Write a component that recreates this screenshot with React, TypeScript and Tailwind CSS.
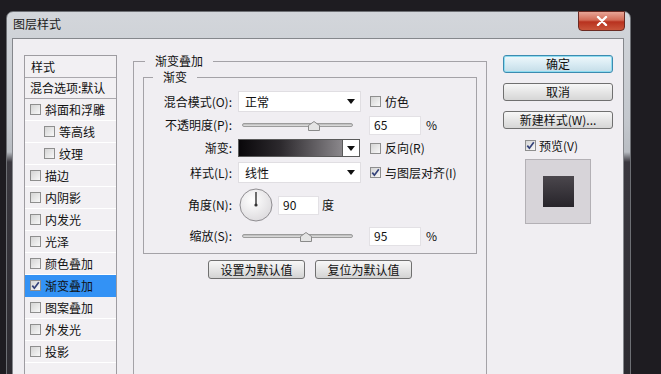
import React from 'react';

const Box = ({ checked }: { checked?: boolean }) => (
  <span className="inline-flex h-[11px] w-[11px] shrink-0 items-center justify-center border border-[#8e8e8e] bg-[linear-gradient(135deg,#d4d4d4,#f8f8f8)]">
    {checked && (
      <svg width="9" height="9" viewBox="0 0 9 9">
        <path d="M1.3 4.6 L3.4 7.2 L7.8 1.2" fill="none" stroke="#34427a" strokeWidth="1.7" />
      </svg>
    )}
  </span>
);

const Thumb = () => (
  <svg width="12" height="10" viewBox="0 0 12 10">
    <path d="M0.5 9.5 V4.5 L6 0.5 L11.5 4.5 V9.5 Z" fill="#e4e4e4" stroke="#8a8a8a" />
  </svg>
);

const Arrow = () => (
  <svg width="8" height="5" viewBox="0 0 8 5">
    <path d="M0 0 H8 L4 5 Z" fill="#111" />
  </svg>
);

const Slider = ({ at }: { at: number }) => (
  <div className="relative h-[20px] w-[123px]">
    <div className="absolute left-[4px] top-[8px] h-[4px] w-[111px] rounded-full border border-[#9c9c9c] bg-[linear-gradient(#b8b8b8,#e2e2e2)]" />
    <div className="absolute top-[6px]" style={{ left: at - 6 }}>
      <Thumb />
    </div>
  </div>
);

const Field = ({ value, w }: { value: string; w: string }) => (
  <div className={`${w} flex h-[19px] items-center border border-[#e3e1e5] bg-white pl-[4px] text-[12px]`}>{value}</div>
);

const Label = ({ children }: { children: React.ReactNode }) => (
  <div className="w-[79px] shrink-0 text-right text-[12px] leading-[14px]">{children}</div>
);

const Select = ({ value }: { value: string }) => (
  <div className="ml-[6px] flex h-[21px] w-[123px] items-center justify-between border border-[#e0dee2] bg-white pl-[6px] pr-[5px] text-[12px]">
    <span>{value}</span>
    <Arrow />
  </div>
);

const listItems = [
  { label: '斜面和浮雕' },
  { label: '等高线', indent: true },
  { label: '纹理', indent: true },
  { label: '描边' },
  { label: '内阴影' },
  { label: '内发光' },
  { label: '光泽' },
  { label: '颜色叠加' },
  { label: '渐变叠加', checked: true, active: true },
  { label: '图案叠加' },
  { label: '外发光' },
  { label: '投影' },
];

const btn =
  'flex h-[18px] w-full items-center justify-center rounded-[3px] border border-[#707070] bg-[linear-gradient(#f7f7f7,#e6e6e6_50%,#d6d6d6)] text-[12px] leading-none';

export default function App() {
  return (
    <div className="h-[374px] w-[661px] overflow-hidden bg-[#1e1c21] pl-[6px] pt-[11px] font-['Noto_Sans_CJK_SC','Noto_Sans',sans-serif] text-[#111]">
      <div className="flex h-[400px] w-[625px] flex-col rounded-t-[7px] border border-[#6d6f74] bg-[linear-gradient(to_bottom,#d3d6db_0px,#c3c7cd_110px,#b9bdc3_140px,#3a383f_150px,#2b292f_100%)]">
        <div className="flex h-[26px] shrink-0 items-start justify-between">
          <span className="pl-[6px] pt-[5px] text-[12px] leading-[14px] text-[#1a1a1a]">图层样式</span>
          <div className="-mt-[1px] mr-[5px] flex h-[20px] w-[47px] items-center justify-center rounded-b-[4px] border border-[#6b2a22] bg-[linear-gradient(#e8a596,#d26a55_45%,#b8321f_55%,#c9553b)]">
            <svg width="12" height="10" viewBox="0 0 12 10">
              <path d="M2 1 L10 9 M10 1 L2 9" stroke="#fff" strokeWidth="2.4" strokeLinecap="round" />
            </svg>
          </div>
        </div>
        <div className="flex flex-1 pl-[5px] pr-[6px]">
          <div className="flex flex-1 border border-[#85878c] bg-[#f0eef2] pl-[11px] pt-[16px]">
            {/* left style list */}
            <div className="flex h-[340px] w-[93px] shrink-0 flex-col border border-[#9e9ca1] bg-[#f2f0f3] text-[12px]">
              <div className="flex h-[22px] items-center border-b border-[#aaa8ad] pl-[6px]">样式</div>
              <div className="flex h-[21px] items-center border-b border-[#aaa8ad] pl-[5px] whitespace-nowrap">混合选项:默认</div>
              {listItems.map((it) => (
                <div
                  key={it.label}
                  className={`flex h-[22px] items-center gap-[4px] border-b whitespace-nowrap ${
                    it.indent ? 'pl-[19px]' : 'pl-[5px]'
                  } ${it.active ? 'border-[#3392f5] bg-[#3392f5]' : 'border-white'}`}
                >
                  <Box checked={it.checked} />
                  <span>{it.label}</span>
                </div>
              ))}
            </div>

            {/* middle panel */}
            <fieldset className="-mt-[1px] ml-[16px] h-[340px] w-[354px] shrink-0 border border-[#a4a2a7] px-[9px]">
              <legend className="ml-[2px] px-[10px] text-[12px] leading-[14px]">渐变叠加</legend>
              <fieldset className="mt-[2px] border border-[#a4a2a7] px-[9px] pb-[7px] pt-[7px]">
                <legend className="px-[10px] text-[12px] leading-[14px]">渐变</legend>
                <div className="flex h-[21px] items-center">
                  <Label>混合模式(O):</Label>
                  <Select value="正常" />
                  <div className="ml-[9px] flex items-center gap-[4px] text-[12px]">
                    <Box />
                    <span>仿色</span>
                  </div>
                </div>
                <div className="mt-[3px] flex h-[20px] items-center">
                  <Label>不透明度(P):</Label>
                  <div className="ml-[6px]">
                    <Slider at={76} />
                  </div>
                  <div className="ml-[8px]">
                    <Field value="65" w="w-[52px]" />
                  </div>
                  <span className="ml-[5px] text-[12px]">%</span>
                </div>
                <div className="mt-[4px] flex h-[18px] items-center">
                  <Label>渐变:</Label>
                  <div className="ml-[6px] flex h-[18px] w-[122px] border border-[#5a5a5a]">
                    <div className="flex-1 bg-[linear-gradient(to_right,#09070a,#2c292d_40%,#8a878b)]" />
                    <div className="flex w-[17px] items-center justify-center border-l border-[#5a5a5a] bg-white">
                      <Arrow />
                    </div>
                  </div>
                  <div className="ml-[10px] flex items-center gap-[4px] text-[12px]">
                    <Box />
                    <span>反向(R)</span>
                  </div>
                </div>
                <div className="mt-[5px] flex h-[21px] items-center">
                  <Label>样式(L):</Label>
                  <Select value="线性" />
                  <div className="ml-[9px] flex items-center gap-[4px] whitespace-nowrap text-[12px]">
                    <Box checked />
                    <span>与图层对齐(I)</span>
                  </div>
                </div>
                <div className="mt-[5px] flex h-[34px] items-center">
                  <Label>角度(N):</Label>
                  <svg className="ml-[7px]" width="34" height="34" viewBox="0 0 34 34">
                    <defs>
                      <radialGradient id="dial" cx="0.4" cy="0.35" r="0.7">
                        <stop offset="0" stopColor="#ffffff" />
                        <stop offset="1" stopColor="#dcdadd" />
                      </radialGradient>
                    </defs>
                    <circle cx="17" cy="17" r="16" fill="url(#dial)" stroke="#8f8d91" />
                    <line x1="17" y1="17" x2="17" y2="4" stroke="#333" strokeWidth="1.4" />
                    <circle cx="17" cy="17" r="1.6" fill="#333" />
                  </svg>
                  <div className="ml-[5px]">
                    <Field value="90" w="w-[41px]" />
                  </div>
                  <span className="ml-[3px] text-[12px]">度</span>
                </div>
                <div className="mt-[4px] flex h-[20px] items-center">
                  <Label>缩放(S):</Label>
                  <div className="ml-[6px]">
                    <Slider at={68} />
                  </div>
                  <div className="ml-[8px]">
                    <Field value="95" w="w-[52px]" />
                  </div>
                  <span className="ml-[5px] text-[12px]">%</span>
                </div>
              </fieldset>
              <div className="mt-[6px] flex justify-center gap-[10px]">
                <div className="flex h-[19px] w-[97px] items-center justify-center rounded-[3px] border border-[#707070] bg-[linear-gradient(#f7f7f7,#e6e6e6_50%,#d3d3d3)] text-[12px]">设置为默认值</div>
                <div className="flex h-[19px] w-[97px] items-center justify-center rounded-[3px] border border-[#707070] bg-[linear-gradient(#f7f7f7,#e6e6e6_50%,#d3d3d3)] text-[12px]">复位为默认值</div>
              </div>
            </fieldset>

            {/* right column */}
            <div className="ml-[16px] flex w-[110px] shrink-0 flex-col">
              <div className="flex h-[18px] w-full items-center justify-center rounded-[3px] border border-[#3c8bb0] bg-[linear-gradient(#eef7fb,#d9ebf3_50%,#c4dde8)] text-[12px] leading-none shadow-[inset_0_0_0_1px_#8fdcf0]">确定</div>
              <div className={`${btn} mt-[10px]`}>取消</div>
              <div className={`${btn} mt-[10px]`}>新建样式(W)...</div>
              <div className="mt-[10px] flex items-center gap-[3px] pl-[22px] text-[12px] leading-[13px]">
                <Box checked />
                <span>预览(V)</span>
              </div>
              <div className="ml-[22px] mt-[7px] flex h-[65px] w-[66px] items-center justify-center border border-[#b3b0b5] bg-[#d7d4d9]">
                <div className="h-[31px] w-[31px] bg-[linear-gradient(#4b474d,#27242a)]" />
              </div>
            </div>
          </div>
        </div>
      </div>
    </div>
  );
}
